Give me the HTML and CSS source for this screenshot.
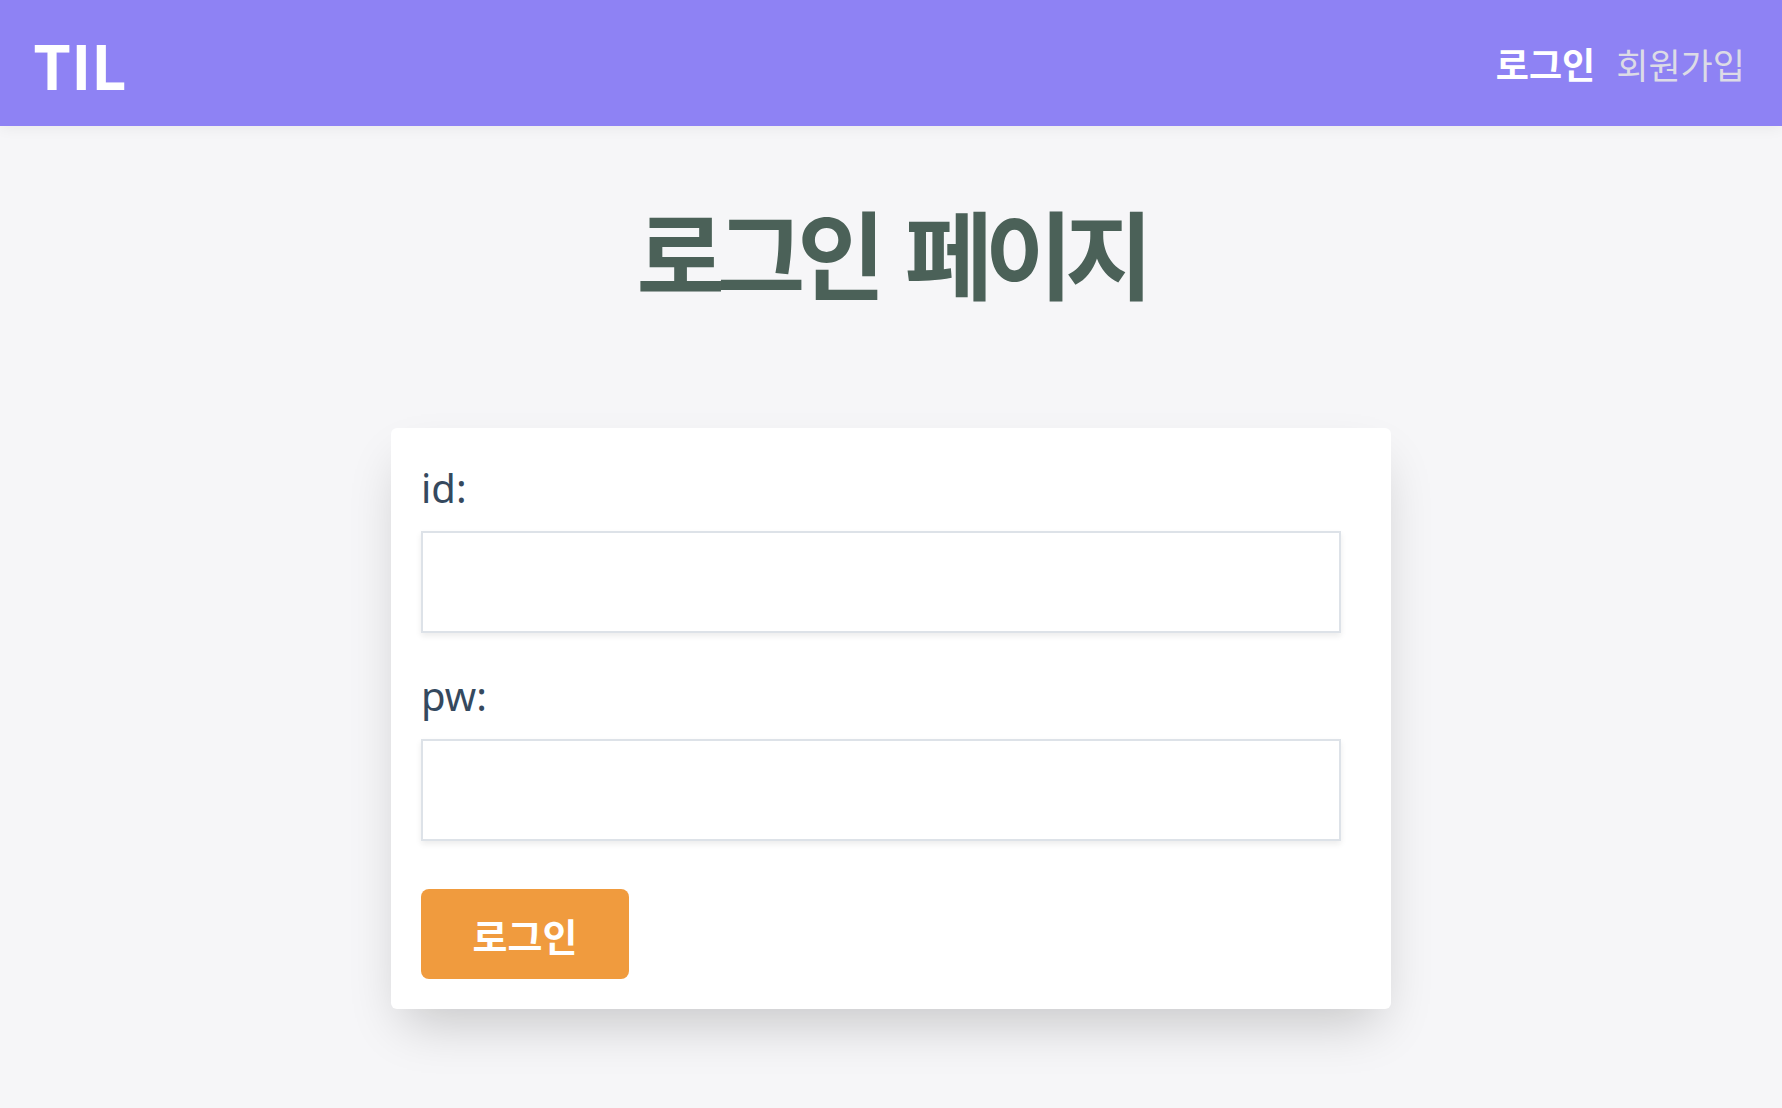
FILE: index.html
```html
<!DOCTYPE html>
<html lang="ko">
<head>
<meta charset="utf-8">
<title>TIL - 로그인</title>
<link rel="stylesheet" href="styles.css">
</head>
<body>
  <header class="topbar">
    <a class="brand" href="#">TIL</a>
    <nav class="nav">
      <a class="nav-link active" href="#">로그인</a>
      <a class="nav-link" href="#">회원가입</a>
    </nav>
  </header>
  <main class="page">
    <h1 class="page-title">로그인 페이지</h1>
    <form class="login-card">
      <div class="field">
        <label class="field-label" for="uid">id:</label>
        <input class="field-input" id="uid" type="text">
      </div>
      <div class="field">
        <label class="field-label" for="upw">pw:</label>
        <input class="field-input" id="upw" type="password">
      </div>
      <button class="submit-btn" type="button">로그인</button>
    </form>
  </main>
</body>
</html>
```
FILE: styles.css
```css
* { box-sizing: border-box; }

html, body {
  margin: 0;
  padding: 0;
}

body {
  background: #f6f6f8;
  font-family: "Noto Sans", "Noto Sans CJK KR", sans-serif;
  min-height: 1108px;
}

.topbar {
  height: 126px;
  background: #8e82f4;
  display: flex;
  align-items: center;
  justify-content: space-between;
  padding: 0 37px 0 33px;
  box-shadow: 0 2px 14px rgba(0, 0, 0, 0.06);
  position: relative;
  z-index: 1;
}

.brand {
  font-family: "Noto Sans CJK KR", sans-serif;
  font-weight: 700;
  font-size: 61px;
  color: #ffffff;
  text-decoration: none;
  line-height: 1;
}

.nav {
  display: flex;
  align-items: center;
  gap: 21px;
}

.nav-link {
  font-family: "Noto Sans CJK KR", sans-serif;
  font-size: 35px;
  color: #dcdbe6;
  text-decoration: none;
  line-height: 1;
}

.nav-link.active {
  color: #ffffff;
  font-weight: 700;
  font-size: 36px;
}

.page {
  display: flex;
  flex-direction: column;
  align-items: center;
}

.page-title {
  margin: 77px 0 129px;
  font-family: "Noto Sans CJK KR", sans-serif;
  font-weight: 700;
  font-size: 96px;
  letter-spacing: -8px;
  word-spacing: 8px;
  line-height: 1;
  color: #4b6158;
}

.login-card {
  width: 1000px;
  background: #ffffff;
  border-radius: 6px;
  padding: 30px;
  box-shadow: 0 25px 50px -12px rgba(0, 0, 0, 0.2);
  display: flex;
  flex-direction: column;
  align-items: flex-start;
}

.field {
  display: flex;
  flex-direction: column;
  width: 920px;
  margin-bottom: 33px;
}

.field + .field {
  margin-bottom: 48px;
}

.field-label {
  font-family: "Noto Sans", sans-serif;
  font-size: 40px;
  line-height: 60px;
  color: #35495e;
  margin-bottom: 13px;
}

.field-input {
  width: 920px;
  height: 102px;
  border: 2px solid #dde2e8;
  background: #ffffff;
  box-shadow: 0 3px 6px rgba(0, 0, 0, 0.08);
  font-size: 32px;
  padding: 0 16px;
  outline: none;
}

.submit-btn {
  width: 208px;
  height: 90px;
  border: none;
  border-radius: 8px;
  background: #f09b3e;
  color: #ffffff;
  font-family: "Noto Sans CJK KR", sans-serif;
  font-weight: 700;
  font-size: 38px;
  cursor: pointer;
}
```
